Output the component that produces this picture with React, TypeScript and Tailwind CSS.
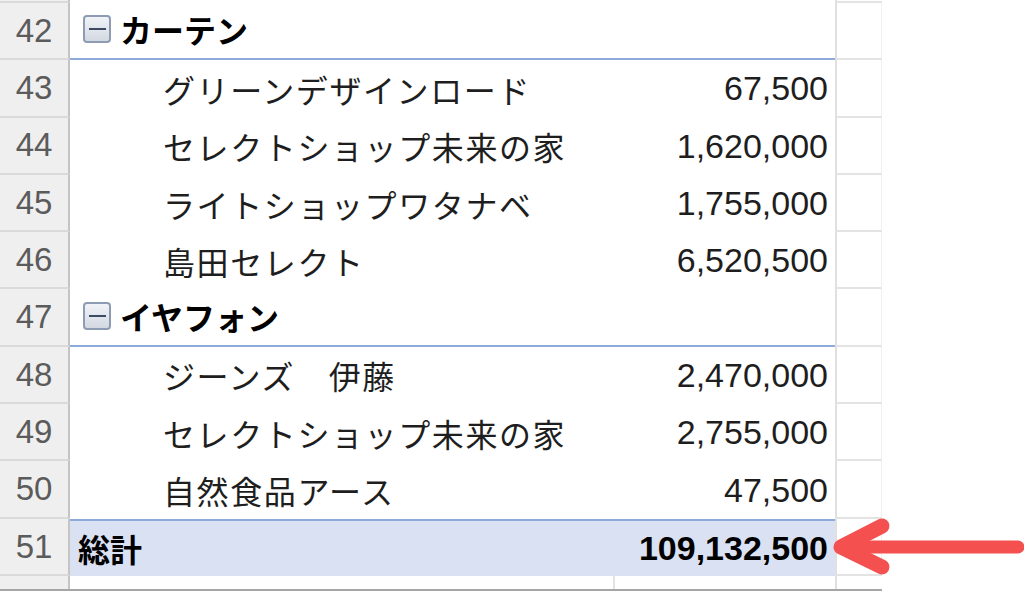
import React from 'react';

type Row =
  | { kind: 'group'; no: number; label: string }
  | { kind: 'item'; no: number; label: string; value: string }
  | { kind: 'total'; no: number; label: string; value: string };

const ROWS: Row[] = [
  { kind: 'group', no: 42, label: 'カーテン' },
  { kind: 'item', no: 43, label: 'グリーンデザインロード', value: '67,500' },
  { kind: 'item', no: 44, label: 'セレクトショップ未来の家', value: '1,620,000' },
  { kind: 'item', no: 45, label: 'ライトショップワタナベ', value: '1,755,000' },
  { kind: 'item', no: 46, label: '島田セレクト', value: '6,520,500' },
  { kind: 'group', no: 47, label: 'イヤフォン' },
  { kind: 'item', no: 48, label: 'ジーンズ　伊藤', value: '2,470,000' },
  { kind: 'item', no: 49, label: 'セレクトショップ未来の家', value: '2,755,000' },
  { kind: 'item', no: 50, label: '自然食品アース', value: '47,500' },
  { kind: 'total', no: 51, label: '総計', value: '109,132,500' },
];

const jp = "font-['Noto_Sans_CJK_JP','Noto_Sans',sans-serif]";
const num = "font-['Liberation_Sans','Noto_Sans_CJK_JP',sans-serif]";

// collapse button used by the pivot group rows
const MinusBox = () => (
  <div className="w-[28px] h-[28px] mr-[9px] rounded-[4px] border-2 border-[#8e9cb3] bg-gradient-to-b from-[#f1f3f7] to-[#d3d9e2] flex items-center justify-center shrink-0">
    <div className="w-[17px] h-[2px] bg-[#3d4a62]" />
  </div>
);

const RowHead = ({ no }: { no: number }) => (
  <div className="w-[70px] shrink-0 bg-[#efefef] border-r-2 border-r-[#c4c4c4] border-b-2 border-b-[#dadada] flex items-center justify-center text-[33px] text-[#5b5b5b] font-['Liberation_Sans',sans-serif]">
    {no}
  </div>
);

const ColB = () => (
  <div className="w-[47px] shrink-0 border-l-2 border-l-[#e0e0e0] border-b-2 border-b-[#e3e3e3] border-r border-r-[#f5eeee] bg-white" />
);

const SheetRow = ({ row }: { row: Row }) => {
  let cell: React.ReactNode;
  if (row.kind === 'group') {
    cell = (
      <div className="w-[765px] shrink-0 border-b-2 border-b-[#8eaadb] flex items-center pl-[13px] pb-[3px]">
        <MinusBox />
        <span className={`${jp} text-[32px] font-bold text-black`}>{row.label}</span>
      </div>
    );
  } else if (row.kind === 'item') {
    cell = (
      <div className="w-[765px] shrink-0 flex items-center justify-between pl-[93px] pr-[7px]">
        <span className={`${jp} text-[32px] text-[#1e1e1e] tracking-[1.6px]`}>{row.label}</span>
        <span className={`${num} text-[34px] text-[#1e1e1e]`}>{row.value}</span>
      </div>
    );
  } else {
    cell = (
      <div className="w-[765px] shrink-0 border-t-2 border-t-[#8eaadb] bg-[#d9e1f2] flex items-center justify-between pl-[8px] pr-[7px]">
        <span className={`${jp} text-[32px] font-bold text-black`}>{row.label}</span>
        <span className={`${num} text-[34px] font-bold text-black`}>{row.value}</span>
      </div>
    );
  }
  return (
    <div className="flex h-[57.3px]">
      <RowHead no={row.no} />
      {cell}
      <ColB />
    </div>
  );
};

const App: React.FC = () => {
  return (
    <div className="relative w-[1024px] h-[599px] bg-white overflow-hidden">
      <div className="w-[882px]">
        {/* sliver of row 41 */}
        <div className="flex h-[3px]">
          <div className="w-[70px] shrink-0 bg-[#efefef] border-r-2 border-r-[#c4c4c4] border-b-2 border-b-[#dadada]" />
          <div className="w-[765px] shrink-0" />
          <div className="w-[47px] shrink-0 border-l-2 border-l-[#e0e0e0] border-b-2 border-b-[#e3e3e3]" />
        </div>
        {ROWS.map(r => (
          <SheetRow key={r.no} row={r} />
        ))}
        {/* sliver of row 52 */}
        <div className="flex h-[15px] border-b-2 border-b-[#a6a6a6]">
          <div className="w-[70px] shrink-0 bg-[#efefef] border-r-2 border-r-[#c4c4c4]" />
          <div className="w-[545px] shrink-0 border-r-2 border-r-[#e3e3e3]" />
          <div className="w-[220px] shrink-0" />
          <div className="w-[47px] shrink-0 border-l-2 border-l-[#e0e0e0]" />
        </div>
      </div>

      {/* red arrow pointing at the grand total */}
      <svg className="absolute left-0 top-0" width="1024" height="599" viewBox="0 0 1024 599">
        <g stroke="#f55050" strokeWidth="13" strokeLinecap="round" strokeLinejoin="round" fill="none">
          <line x1="842" y1="547" x2="1018" y2="547" />
          <polyline points="882,526 841,547 882,567" strokeWidth="15" />
        </g>
      </svg>
    </div>
  );
};

export default App;
